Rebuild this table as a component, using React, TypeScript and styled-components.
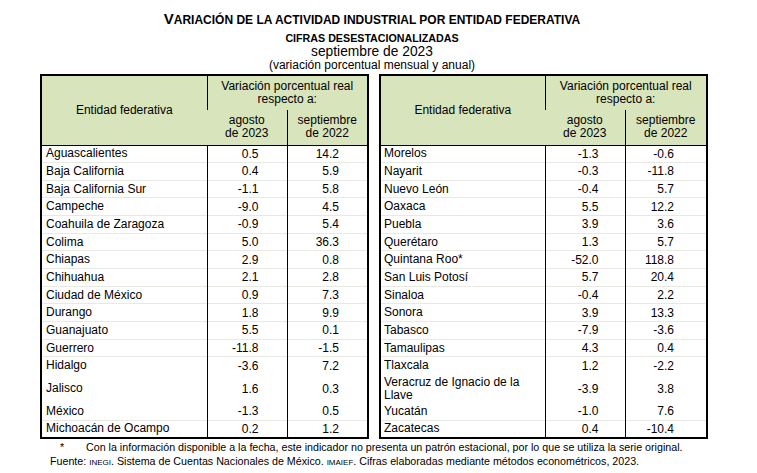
import React from "react";
import styled, { createGlobalStyle } from "styled-components";

const Global = createGlobalStyle`
  html, body { margin: 0; padding: 0; background: #fff; }
  body { font-family: "Liberation Sans", Arial, sans-serif; color: #000; }
`;

const Page = styled.div`
  width: 757px;
  height: 473px;
  box-sizing: border-box;
  padding: 11px 0 0 40px;
`;

const Content = styled.div`
  width: 664px;
`;

const Heading = styled.header`
  display: flex;
  flex-direction: column;
  align-items: center;
  text-align: center;
`;

const Title = styled.h1`
  margin: 0;
  font-size: 12px;
  line-height: 16px;
  font-weight: bold;
  text-transform: uppercase;
`;

const Initial = styled.span`
  font-size: 15px;
`;

const Subtitle = styled.div`
  margin-top: 3px;
  font-size: 10.7px;
  line-height: 14px;
  font-weight: bold;
`;

const Period = styled.div`
  font-size: 13.8px;
  line-height: 14px;
`;

const Note = styled.div`
  font-size: 12px;
  line-height: 13px;
`;

const Tables = styled.div`
  display: flex;
  gap: 10px;
  margin-top: 2px;
`;

const Table = styled.table`
  width: 327px;
  table-layout: fixed;
  border-collapse: collapse;
  border: 2px solid #000;
  font-size: 12px;
`;

const HeadCell = styled.th`
  background: #d8e4bc;
  font-weight: normal;
  text-align: center;
  vertical-align: middle;
  line-height: 13px;
  padding: 0 1px;
  border-left: 1px solid #000;
  border-bottom: 1px solid #000;
  &:first-child { border-left: none; }
`;

const HeadRow = styled.tr<{ $h: number }>`
  height: ${(p) => p.$h}px;
`;

const Row = styled.tr<{ $tall?: boolean }>`
  height: ${(p) => (p.$tall ? 28 : 17.67)}px;
  & + & td { border-top: 1px solid #e9e9e4; }
`;

const NameCell = styled.td<{ $pl: number }>`
  padding: 0 0 0 ${(p) => p.$pl}px;
  line-height: 13px;
  vertical-align: middle;
  white-space: nowrap;
`;

const NumCell = styled.td<{ $pr: number }>`
  padding: 0 ${(p) => p.$pr}px 0 0;
  text-align: right;
  vertical-align: middle;
  border-left: 1px solid #000;
`;

const Footer = styled.div`
  margin-top: 1px;
  font-size: 10.7px;
  line-height: 14px;
  white-space: nowrap;
`;

const FootLine = styled.div<{ $indent: number }>`
  padding-left: ${(p) => p.$indent}px;
  display: flex;
`;

const Star = styled.span`
  width: 26px;
`;

const Acr = styled.span`
  font-size: 8px;
`;

type Entry = [string, string, string, boolean?];

const left: Entry[] = [
  ["Aguascalientes", "0.5", "14.2"],
  ["Baja California", "0.4", "5.9"],
  ["Baja California Sur", "-1.1", "5.8"],
  ["Campeche", "-9.0", "4.5"],
  ["Coahuila de Zaragoza", "-0.9", "5.4"],
  ["Colima", "5.0", "36.3"],
  ["Chiapas", "2.9", "0.8"],
  ["Chihuahua", "2.1", "2.8"],
  ["Ciudad de México", "0.9", "7.3"],
  ["Durango", "1.8", "9.9"],
  ["Guanajuato", "5.5", "0.1"],
  ["Guerrero", "-11.8", "-1.5"],
  ["Hidalgo", "-3.6", "7.2"],
  ["Jalisco", "1.6", "0.3", true],
  ["México", "-1.3", "0.5"],
  ["Michoacán de Ocampo", "0.2", "1.2"],
];

const right: Entry[] = [
  ["Morelos", "-1.3", "-0.6"],
  ["Nayarit", "-0.3", "-11.8"],
  ["Nuevo León", "-0.4", "5.7"],
  ["Oaxaca", "5.5", "12.2"],
  ["Puebla", "3.9", "3.6"],
  ["Querétaro", "1.3", "5.7"],
  ["Quintana Roo*", "-52.0", "118.8"],
  ["San Luis Potosí", "5.7", "20.4"],
  ["Sinaloa", "-0.4", "2.2"],
  ["Sonora", "3.9", "13.3"],
  ["Tabasco", "-7.9", "-3.6"],
  ["Tamaulipas", "4.3", "0.4"],
  ["Tlaxcala", "1.2", "-2.2"],
  ["Veracruz de Ignacio de la|Llave", "-3.9", "3.8", true],
  ["Yucatán", "-1.0", "7.6"],
  ["Zacatecas", "0.4", "-10.4"],
];

function StateTable({
  rows,
  widths,
  pl,
  pr,
}: {
  rows: Entry[];
  widths: [number, number, number];
  pl: number;
  pr: [number, number];
}) {
  return (
    <Table>
      <colgroup>
        {widths.map((w, i) => (
          <col key={i} style={{ width: w }} />
        ))}
      </colgroup>
      <thead>
        <HeadRow $h={35}>
          <HeadCell rowSpan={2}>Entidad federativa</HeadCell>
          <HeadCell colSpan={2} style={{ borderBottom: "none" }}>
            Variación porcentual real
            <br />
            respecto a:
          </HeadCell>
        </HeadRow>
        <HeadRow $h={35}>
          <HeadCell>
            agosto
            <br />
            de 2023
          </HeadCell>
          <HeadCell>
            septiembre
            <br />
            de 2022
          </HeadCell>
        </HeadRow>
      </thead>
      <tbody>
        {rows.map(([name, a, b, tall]) => {
          const parts = name.split("|");
          return (
            <Row key={name} $tall={tall}>
              <NameCell $pl={pl}>
                {parts.map((p, i) => (
                  <React.Fragment key={i}>
                    {i > 0 && <br />}
                    {p}
                  </React.Fragment>
                ))}
              </NameCell>
              <NumCell $pr={pr[0]}>{a}</NumCell>
              <NumCell $pr={pr[1]}>{b}</NumCell>
            </Row>
          );
        })}
      </tbody>
    </Table>
  );
}

export default function App() {
  return (
    <>
      <Global />
      <Page>
        <Content>
          <Heading>
            <Title>
              <Initial>V</Initial>ariación de la actividad industrial por entidad federativa
            </Title>
            <Subtitle>CIFRAS DESESTACIONALIZADAS</Subtitle>
            <Period>septiembre de 2023</Period>
            <Note>(variación porcentual mensual y anual)</Note>
          </Heading>
          <Tables>
            <StateTable rows={left} widths={[166, 80, 81]} pl={4} pr={[28, 28]} />
            <StateTable rows={right} widths={[165, 80, 82]} pl={3} pr={[26, 32]} />
          </Tables>
          <Footer>
            <FootLine $indent={20}>
              <Star>*</Star>
              <span>
                Con la información disponible a la fecha, este indicador no presenta un patrón
                estacional, por lo que se utiliza la serie original.
              </span>
            </FootLine>
            <FootLine $indent={10}>
              <span>
                Fuente: <Acr>INEGI</Acr>. Sistema de Cuentas Nacionales de México. <Acr>IMAIEF</Acr>.
                Cifras elaboradas mediante métodos econométricos, 2023.
              </span>
            </FootLine>
          </Footer>
        </Content>
      </Page>
    </>
  );
}
